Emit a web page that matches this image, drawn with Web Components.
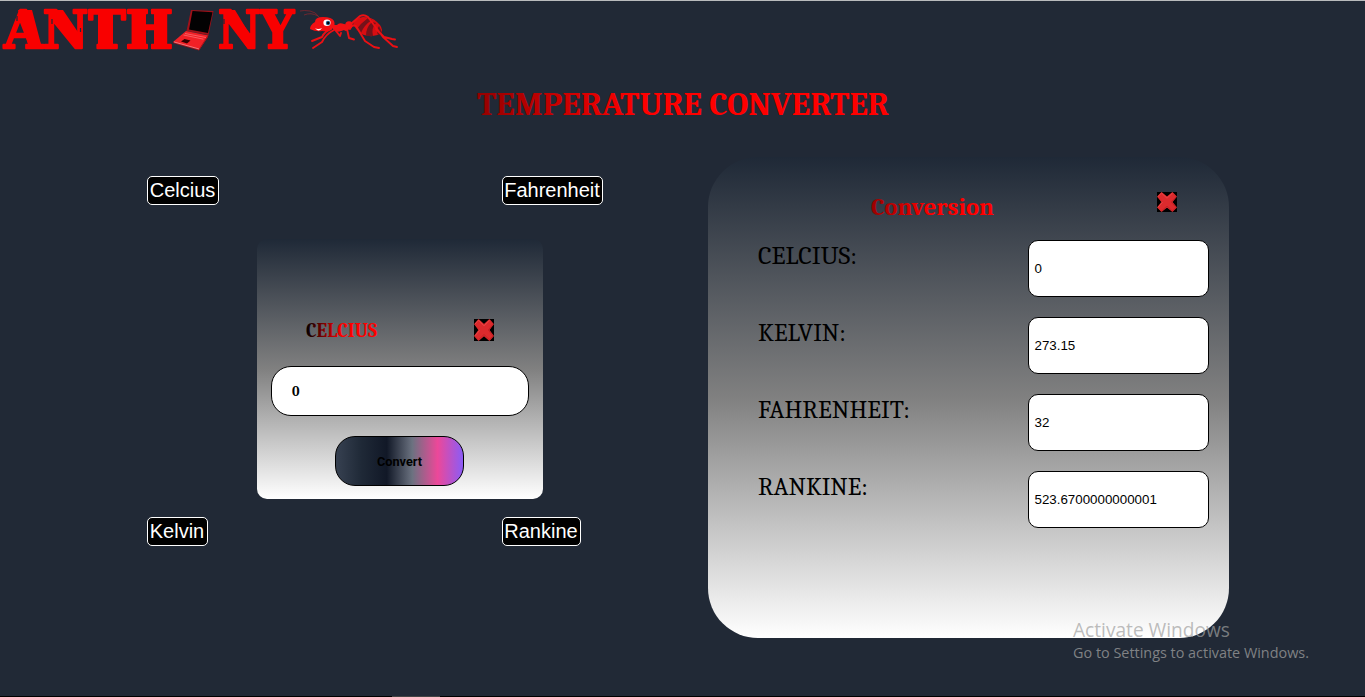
<!DOCTYPE html>
<html lang="en">
<head>
<meta charset="utf-8">
<title>Temperature Converter</title>
<style>
html,body{margin:0;height:100%;overflow:hidden;background:#212936}
body{font-family:"Liberation Sans",Arial,sans-serif;color:#000}
</style>
</head>
<body>
<converter-page></converter-page>
<script>
const define=(name,html)=>customElements.define(name,class extends HTMLElement{
  constructor(){super();const t=document.createElement('template');t.innerHTML=html;
    this.attachShadow({mode:'open'}).append(t.content.cloneNode(true));}
});

/* One line of text set to an exact measure: w, h, base, size, optional gradient start colour */
customElements.define('fit-text',class extends HTMLElement{
  connectedCallback(){
    if(this.shadowRoot)return;
    const a=(n,d)=>this.getAttribute(n)??d, w=+a('w'),h=+a('h');
    this.attachShadow({mode:'open'}).innerHTML=`<style>:host{display:block;flex:none;width:${w}px;height:${h}px}svg{display:block;overflow:visible}</style>
    <svg width="${w}" height="${h}"><defs><linearGradient id="g" gradientUnits="userSpaceOnUse" x1="0" y1="0" x2="${w}" y2="0">
    <stop offset="0" stop-color="${a('from','#000')}"/><stop offset="${a('stop','.5')}" stop-color="#f00"/></linearGradient></defs>
    <text x="0" y="${a('base')}" textLength="${w}" lengthAdjust="spacingAndGlyphs" font-family="${a('face','Cambria, Caladea, Noto Serif, DejaVu Serif, serif')}" font-size="${a('size')}" font-weight="${a('weight','400')}" fill="${this.hasAttribute('from')?'url(#g)':a('color','#000')}">${this.textContent}</text></svg>`;
  }
});

define('close-icon',`<style>:host{display:block;flex:none;width:20px;height:var(--h,20px)}svg{display:block;width:100%;height:100%}</style>
<svg viewBox="0 0 20 20" preserveAspectRatio="none"><path fill="#000" d="M0 0h20v20H0z"/>
<path fill="#dc2a2d" stroke="#dc2a2d" stroke-width="1.200" stroke-linejoin="round" d="M4.500.8 10 5.200 15.500.8 19.200 4.700 14.700 10 19.200 15.400 15.500 19.200 10 14.900 4.500 19.200.8 15.400 5.200 10 .8 4.700Z"/>
<path fill="none" stroke="#f4595a" stroke-width=".6" d="M.9 4.700 4.500 1.100 10 6.200 15.500 1.100M.9 15.400 5.700 10.200"/>
<path fill="none" stroke="#b51d22" stroke-width=".6" d="m19.100 4.900-4.700 5.100 4.700 5.400-3.600 3.600-5.500-4.900L4.500 19"/></svg>`);

define('brand-logo',`<style>:host{display:block;width:400px;height:54px}svg{display:block;overflow:visible}text{font-family:"DejaVu Serif",serif;font-weight:700;font-size:51.500px;fill:#f90000;stroke:#f90000;stroke-width:2.400;stroke-linejoin:round}</style>
<svg width="400" height="54" viewBox="0 0 400 54">
<text x="4" y="48" textLength="169" lengthAdjust="spacingAndGlyphs">ANTH</text>
<text x="218" y="48" textLength="76" lengthAdjust="spacingAndGlyphs">NY</text>
<path d="M50 10h13l19 28v11h-4L52 15ZM222 10h13l17 28v11h-4L224 15ZM18 10h14l10 38H29ZM98 12h12v35H98zM134 12h12v35h-12zM154 12h12v35h-12z" fill="#f90000"/>
<path d="M52 19v5M80.500 28v4M224 19v5M150 11v7M150 41v7M17 16v5" stroke="#212936" stroke-width="1.200"/>
<path d="m191 10 22.500 1-5 24-22-4Z" fill="#a01018"/><path d="m192.500 11 20 1.200-4.500 20.800-19-3.500Z" fill="#030203"/>
<path d="m186 31 22.500 4.500-9 14-26.500-7.500Z" fill="#f12026"/><path d="m173 42 26 7v1.500l-26-7.500zM199 49l9-14v2l-9 13.500Z" fill="#aa1118"/>
<path d="m185 33.500 21 4M183.500 35l20 4.200" stroke="#ff8488" stroke-width=".6"/>
<path d="m184.500 39 6 1.500-3.500 3-6-2Z" fill="#300"/><path d="m174 42 25 7" stroke="#ffa3a6" stroke-width=".7"/>
<g fill="none" stroke="#8f252d" stroke-width=".7"><path d="M319 17q-3-5-9-6-6-1-10 0M318 16q-7-4-14-1"/></g>
<path d="M353 24q2-6 10-7 9 0 14 5 6 5 5 11-8 5-18 2-6-2-11-11Z" fill="#d90d11"/>
<path d="M356 30q5-7 12-12l4 2q-8 5-11 13ZM366 36q0-9 6-14l4 1q-5 5-3 13ZM378 35q-2-5 1-9l3 6v2Z" fill="#74121a"/>
<g fill="none" stroke="#ec1014" stroke-linecap="round" stroke-linejoin="round" stroke-width="1.900">
<path d="M331 29q-6 2-9 8l-10 4M334 30q-8 4-12 12l-9 6M336 31l4 5 1-3M347 29l2 9 5 1.500M350 29q2-5 6-3l9 15 9 6 5 1M352 23l8-7q4-2 8 1l15 20 10 9 4 1M376 29l8 8 8 2 3 .500"/>
</g>
<path d="M310 29q0-4 5-7 0-5 8-5 9 0 11 4 2 5-2 8-3 3-10 2-6 1-12-2Z" fill="#f30f13"/>
<path d="M333 25h4q2-3 7-1l5 1q3 3-1 5-2 2-4 0-8 4-11-1Z" fill="#ef1014"/>
<circle cx="349" cy="25" r="3.700" fill="#ef1014"/>
<ellipse cx="327" cy="22.700" rx="3.600" ry="3.200" fill="#fff"/><circle cx="328" cy="23" r="2.200" fill="#165f91"/><circle cx="328.200" cy="23" r="1.200" fill="#000"/>
<path d="M315 28.500q4 1 7-.500-2 3-4 2.500Z" fill="#fff"/>
</svg>`);

define('unit-button',`<style>:host{display:block}button{box-sizing:border-box;width:var(--w);height:29px;padding:0 1px 0 0;margin:0;display:flex;align-items:center;justify-content:center;border:1px solid #fff;border-radius:5px;background:#000;color:#fff;font:20px/25px "Liberation Sans",Arial,sans-serif}</style><button><slot></slot></button>`);

define('value-field',`<style>:host{box-sizing:border-box;display:flex;align-items:center;width:181px;height:57px;padding:0 6px 0 5.500px;border:1px solid #000;border-radius:10px;background:#fff;font:13.333px "Liberation Sans",Arial,sans-serif}</style><slot></slot>`);

define('result-row',`<style>:host{display:flex;justify-content:space-between;align-items:flex-start;height:57px}</style><slot name="label"></slot><slot name="value"></slot>`);

define('input-card',`<style>
:host{box-sizing:border-box;display:flex;flex-direction:column;width:286px;height:260px;padding:80px 14px 0;border-radius:10px;background:linear-gradient(#1f2937,#808080,#fff)}
.head{display:flex;justify-content:space-between;padding:0 35px;height:47px;--h:22px}
.field{box-sizing:border-box;height:50px;border:1px solid #000;border-radius:20px;background:#fff;padding:19px 20px 0}
button{width:129px;height:50px;box-sizing:border-box;margin:20px 0 0 64px;padding:0;border:1px solid #000;border-radius:20px;display:flex;justify-content:center;align-items:center;background:linear-gradient(to right,#374151,#1f2937 20%,#111827 40%,#6b7280 60%,#ec4899 80%,#8b5cf6)}
</style>
<div class="head"><fit-text w="71" h="22" base="18" size="20" weight="700" from="#000">CELCIUS</fit-text><close-icon></close-icon></div>
<div class="field"><fit-text w="7.500" h="12" base="10" size="13.5" weight="700">0</fit-text></div>
<button><fit-text w="45" h="14" base="12" size="12.500" weight="700" face="Roboto, sans-serif">Convert</fit-text></button>`);

define('result-card',`<style>
:host{box-sizing:border-box;display:block;width:521px;height:481px;padding:35px 20px 0 50px;border-radius:50px;background:linear-gradient(#1f2937,#808080,#fff)}
.head{display:flex;justify-content:space-between;padding:0 32px 0 113px;height:48px}
.rows{display:flex;flex-direction:column;gap:20px}
</style>
<div class="head"><fit-text w="123" h="28" base="23" size="24" weight="700" from="#9a0000">Conversion</fit-text><close-icon></close-icon></div>
<div class="rows">
<result-row><fit-text slot="label" w="99" h="30" base="24" size="24">CELCIUS:</fit-text><value-field slot="value">0</value-field></result-row>
<result-row><fit-text slot="label" w="88" h="30" base="24" size="24">KELVIN:</fit-text><value-field slot="value">273.15</value-field></result-row>
<result-row><fit-text slot="label" w="152" h="30" base="24" size="24">FAHRENHEIT:</fit-text><value-field slot="value">32</value-field></result-row>
<result-row><fit-text slot="label" w="110" h="30" base="24" size="24">RANKINE:</fit-text><value-field slot="value">523.6700000000001</value-field></result-row>
</div>`);

define('activation-note',`<style>:host{position:absolute;left:1073px;top:615px;display:block}</style>
<fit-text w="157" h="26" base="21" size="19.500" color="rgba(160,160,160,.7)" face="Open Sans, sans-serif">Activate Windows</fit-text>
<fit-text w="236" h="20" base="16" size="14.500" color="rgba(160,160,160,.75)" face="Open Sans, sans-serif">Go to Settings to activate Windows.</fit-text>`);

define('converter-page',`<style>
:host{box-sizing:border-box;position:relative;display:flex;flex-direction:column;width:1365px;height:697px;overflow:hidden;border-top:1px solid #b9bbbd;background:#212936}
brand-logo{margin-top:-1px}
.title{display:flex;justify-content:center;height:36px;margin-top:34px}
main{display:flex;align-items:flex-start;padding-left:147px;height:543px;flex:none}
.left{width:561px;margin-top:52px;flex:none}
.units{display:grid;grid-template-columns:355px auto;height:29px}
input-card{margin:34px 0 18px 110px}
result-card{margin-top:33px;flex:none}
footer{height:1px;margin-top:auto;background:#000;display:flex}
footer i{width:48px;height:1px;margin-left:392px;background:#444}
</style>
<brand-logo></brand-logo>
<div class="title"><fit-text w="412" h="36" base="27" size="32" weight="700" from="#940000" stop=".4">TEMPERATURE CONVERTER</fit-text></div>
<main>
<div class="left"><div class="units"><unit-button style="--w:72px">Celcius</unit-button><unit-button style="--w:101px">Fahrenheit</unit-button></div>
<input-card></input-card>
<div class="units"><unit-button style="--w:61px">Kelvin</unit-button><unit-button style="--w:79px">Rankine</unit-button></div></div>
<result-card></result-card>
</main>
<footer><i></i></footer>
<activation-note></activation-note>`);
</script>
</body>
</html>
